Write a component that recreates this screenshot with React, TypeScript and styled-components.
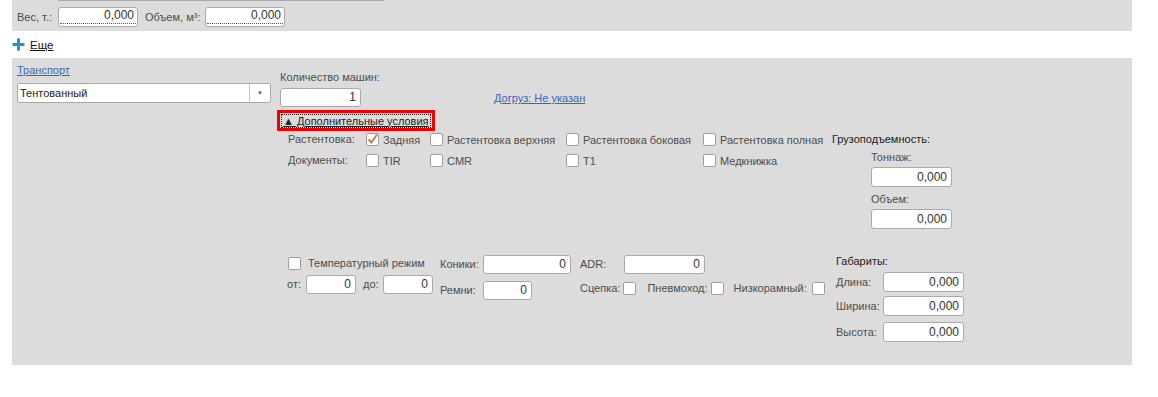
import React from "react";
import styled, {createGlobalStyle} from "styled-components";

const GlobalStyle = createGlobalStyle`
    body {
        margin: 0;
        background: #ffffff;
        font-family: "Liberation Sans", Arial, sans-serif;
        font-size: 11px;
        color: #4d4d4d;
    }
`;

const Page = styled.div`
    width: 1158px;
    height: 397px;
    overflow: hidden;
    position: relative;
`;

const TopPanel = styled.div`
    margin-left: 12px;
    width: 1120px;
    height: 31px;
    background: #dcdcdc;
    box-sizing: border-box;
    padding: 7px 5px 0;
    display: flex;
    align-items: flex-start;
`;

const TopLine = styled.div`
    position: absolute;
    left: 58px;
    top: 0;
    width: 326px;
    height: 1px;
    background: #a8a8a8;
`;

const TopRow = styled.div`
    display: flex;
    align-items: center;
    height: 20px;
`;

const Label = styled.span<{ $w?: number; $dark?: boolean }>`
    display: inline-block;
    width: ${p => (p.$w ? `${p.$w}px` : "auto")};
    color: ${p => (p.$dark ? "#1a1a1a" : "#4d4d4d")};
    white-space: nowrap;
    line-height: 13px;
`;

const Field = styled.div<{ $w: number; $h?: number }>`
    width: ${p => p.$w}px;
    height: ${p => p.$h ?? 20}px;
    box-sizing: border-box;
    background: #ffffff;
    border: 1px solid #a9a9a9;
    border-radius: 3px;
    color: #333333;
    text-align: right;
    padding: 0 4px;
    font-size: 12px;
    line-height: ${p => (p.$h ?? 20) - 2}px;
`;

const ReqField = styled(Field)`
    padding: 0 1px 2px;
`;

const ReqValue = styled.div`
    height: 100%;
    box-sizing: border-box;
    border-bottom: 1px dotted #e0201b;
    padding-right: 2px;
    line-height: 15px;
`;

const MoreRow = styled.div`
    display: flex;
    align-items: center;
    gap: 5px;
    height: 27px;
    margin-left: 12px;
    color: #1a1a1a;
`;

const MoreText = styled.span`
    text-decoration: underline;
    color: #111111;
    font-size: 11.5px;
`;

const Panel = styled.div`
    margin-left: 12px;
    width: 1120px;
    height: 307px;
    background: #dcdcdc;
    box-sizing: border-box;
    padding: 6px 5px;
    display: flex;
    gap: 9px;
`;

const LeftCol = styled.div`
    width: 254px;
    display: flex;
    flex-direction: column;
    gap: 6px;
`;

const Link = styled.span`
    color: #3a68b0;
    text-decoration: underline;
    line-height: 13px;
    white-space: nowrap;
`;

const Select = styled.div`
    height: 20px;
    box-sizing: border-box;
    border: 1px solid #a9a9a9;
    border-radius: 2px;
    background: #ffffff;
    display: flex;
    color: #222222;
    line-height: 18px;
`;

const SelectValue = styled.div`
    flex: 1;
    padding-left: 2px;
`;

const SelectBtn = styled.div`
    width: 20px;
    border-left: 1px solid #c4c4c4;
    display: flex;
    align-items: center;
    justify-content: center;
    font-size: 6px;
    color: #555555;
`;

const RightCol = styled.div`
    flex: 1;
    display: flex;
    flex-direction: column;
`;

const CountRow = styled.div`
    display: flex;
    align-items: flex-end;
    padding-top: 7px;
`;

const Stack = styled.div<{ $gap?: number; $w?: number }>`
    display: flex;
    flex-direction: column;
    gap: ${p => p.$gap ?? 5}px;
    width: ${p => (p.$w ? `${p.$w}px` : "auto")};
`;

const ToggleBox = styled.div`
    margin-left: -3px;
    margin-top: 3px;
    width: 158px;
    height: 21px;
    box-sizing: border-box;
    border: 3px solid #f00000;
    display: flex;
    align-items: center;
    padding-left: 1px;
`;

const ToggleInner = styled.span`
    border: 1px dotted #222222;
    color: #222222;
    line-height: 12px;
    padding: 0 1px;
    white-space: nowrap;
    text-decoration: underline;
`;

const Conditions = styled.div`
    display: flex;
    margin-top: 1px;
`;

const OptGrid = styled.div`
    display: grid;
    grid-template-columns: 78px 64px 136px 137px 129px;
    grid-template-rows: 15px 15px;
    row-gap: 6px;
    padding-left: 8px;
    align-items: center;
`;

const Opt = styled.label`
    display: flex;
    align-items: center;
    gap: 4px;
    white-space: nowrap;
`;

const Box = styled.span`
    width: 13px;
    height: 13px;
    box-sizing: border-box;
    border: 1px solid #9e9e9e;
    border-radius: 2px;
    background: #ffffff;
    display: inline-flex;
    align-items: center;
    justify-content: center;
    flex-shrink: 0;
`;

const Capacity = styled.div`
    display: flex;
    flex-direction: column;
    padding-top: 1px;
`;

const CapacityBody = styled.div`
    display: flex;
    flex-direction: column;
    padding-left: 39px;
    padding-top: 5px;
    gap: 6px;
`;

const CapGroup = styled.div`
    display: flex;
    flex-direction: column;
    gap: 3px;
`;

const Lower = styled.div`
    display: flex;
    margin-top: 26px;
    padding-left: 8px;
`;

const TempCol = styled.div`
    width: 152px;
    display: flex;
    flex-direction: column;
    gap: 3px;
`;

const InlineRow = styled.div<{ $gap?: number; $h?: number }>`
    display: flex;
    align-items: center;
    gap: ${p => p.$gap ?? 4}px;
    height: ${p => (p.$h ? `${p.$h}px` : "auto")};
`;

const FormGrid = styled.div<{ $cols: string; $w: number; $gap?: number }>`
    width: ${p => p.$w}px;
    display: grid;
    grid-template-columns: ${p => p.$cols};
    row-gap: ${p => p.$gap ?? 6}px;
    align-items: center;
    align-content: start;
    justify-items: start;
`;

const DimCol = styled.div`
    display: flex;
    flex-direction: column;
    gap: 4px;
`;

const PlusIcon = () => (
    <svg width="13" height="13" viewBox="0 0 13 13">
        <path d="M6.5 0.5v12M0.5 6.5h12" stroke="#1a93cf" strokeWidth="3"/>
    </svg>
);

const Check = ({checked}: { checked?: boolean }) => (
    <Box>
        {checked && (
            <svg width="11" height="11" viewBox="0 0 11 11">
                <path d="M1.5 5.5l3 3 5.5-8" fill="none" stroke="#b57c43" strokeWidth="1.8"/>
            </svg>
        )}
    </Box>
);

const Option = ({text, checked}: { text: string; checked?: boolean }) => (
    <Opt><Check checked={checked}/>{text}</Opt>
);

export default function App() {
    return (
        <Page>
            <GlobalStyle/>
            <TopLine/>
            <TopPanel>
                <TopRow>
                    <Label $w={41}>Вес, т.:</Label>
                    <ReqField $w={80}><ReqValue>0,000</ReqValue></ReqField>
                    <Label style={{marginLeft: 7}} $w={60}>Объем, м³:</Label>
                    <ReqField $w={80}><ReqValue>0,000</ReqValue></ReqField>
                </TopRow>
            </TopPanel>

            <MoreRow>
                <PlusIcon/>
                <MoreText>Еще</MoreText>
            </MoreRow>

            <Panel>
                <LeftCol>
                    <Link>Транспорт</Link>
                    <Select>
                        <SelectValue>Тентованный</SelectValue>
                        <SelectBtn>▼</SelectBtn>
                    </Select>
                </LeftCol>

                <RightCol>
                    <CountRow>
                        <Stack $gap={4} $w={214}>
                            <Label>Количество машин:</Label>
                            <Field $w={81} $h={19}>1</Field>
                        </Stack>
                        <Link style={{marginBottom: 2}}>Догруз: Не указан</Link>
                    </CountRow>

                    <ToggleBox>
                        <ToggleInner>▲ Дополнительные условия</ToggleInner>
                    </ToggleBox>

                    <Conditions>
                        <OptGrid>
                            <Label>Растентовка:</Label>
                            <Option text="Задняя" checked/>
                            <Option text="Растентовка верхняя"/>
                            <Option text="Растентовка боковая"/>
                            <Option text="Растентовка полная"/>
                            <Label>Документы:</Label>
                            <Option text="TIR"/>
                            <Option text="CMR"/>
                            <Option text="T1"/>
                            <Option text="Медкнижка"/>
                        </OptGrid>
                        <Capacity>
                            <Label $dark>Грузоподъемность:</Label>
                            <CapacityBody>
                                <CapGroup>
                                    <Label>Тоннаж:</Label>
                                    <Field $w={81}>0,000</Field>
                                </CapGroup>
                                <CapGroup>
                                    <Label>Объем:</Label>
                                    <Field $w={81}>0,000</Field>
                                </CapGroup>
                            </CapacityBody>
                        </Capacity>
                    </Conditions>

                    <Lower>
                        <TempCol>
                            <InlineRow $gap={7} $h={17}>
                                <Check/>
                                <Label>Температурный режим</Label>
                            </InlineRow>
                            <InlineRow $gap={0}>
                                <Label $w={19} style={{marginLeft: -1}}>от:</Label>
                                <Field $w={50} $h={19}>0</Field>
                                <Label $w={20} style={{marginLeft: 7}}>до:</Label>
                                <Field $w={50} $h={19}>0</Field>
                            </InlineRow>
                        </TempCol>

                        <FormGrid $cols="43px auto" $w={140} $gap={7}>
                            <Label>Коники:</Label>
                            <Field $w={88} $h={19}>0</Field>
                            <Label>Ремни:</Label>
                            <Field $w={49} $h={19}>0</Field>
                        </FormGrid>

                        <Stack $gap={8} $w={256}>
                            <InlineRow $gap={0}>
                                <Label $w={44}>ADR:</Label>
                                <Field $w={81} $h={19}>0</Field>
                            </InlineRow>
                            <InlineRow $gap={3}>
                                <Label>Сцепка:</Label>
                                <Check/>
                                <Label style={{marginLeft: 8}}>Пневмоход:</Label>
                                <Check/>
                                <Label style={{marginLeft: 7}}>Низкорамный:</Label>
                                <Box style={{marginLeft: 2}}/>
                            </InlineRow>
                        </Stack>

                        <DimCol>
                            <Label $dark>Габариты:</Label>
                            <FormGrid $cols="47px 81px" $w={128} $gap={4}>
                                <Label>Длина:</Label>
                                <Field $w={81}>0,000</Field>
                                <Label>Ширина:</Label>
                                <Field $w={81}>0,000</Field>
                                <Label style={{marginTop: 2}}>Высота:</Label>
                                <Field $w={81} style={{marginTop: 2}}>0,000</Field>
                            </FormGrid>
                        </DimCol>
                    </Lower>
                </RightCol>
            </Panel>
        </Page>
    );
}
